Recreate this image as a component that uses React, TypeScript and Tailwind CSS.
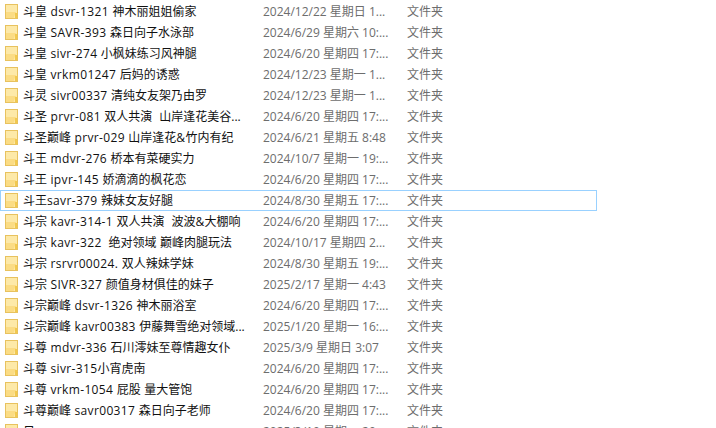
const rows: [string, string][] = [
  ["斗皇 dsvr-1321 神木丽姐姐偷家", "2024/12/22 星期日 1..."],
  ["斗皇 SAVR-393 森日向子水泳部", "2024/6/29 星期六 10:..."],
  ["斗皇 sivr-274 小枫妹练习风神腿", "2024/6/20 星期四 17:..."],
  ["斗皇 vrkm01247 后妈的诱惑", "2024/12/23 星期一 1..."],
  ["斗灵 sivr00337 清纯女友架乃由罗", "2024/12/23 星期一 1..."],
  ["斗圣 prvr-081 双人共演  山岸逢花美谷...", "2024/6/20 星期四 17:..."],
  ["斗圣巅峰 prvr-029 山岸逢花&竹内有纪", "2024/6/21 星期五 8:48"],
  ["斗王 mdvr-276 桥本有菜硬实力", "2024/10/7 星期一 19:..."],
  ["斗王 ipvr-145 娇滴滴的枫花恋", "2024/6/20 星期四 17:..."],
  ["斗王savr-379 辣妹女友好腿", "2024/8/30 星期五 17:..."],
  ["斗宗 kavr-314-1 双人共演  波波&大棚响", "2024/6/20 星期四 17:..."],
  ["斗宗 kavr-322  绝对领域 巅峰肉腿玩法", "2024/10/17 星期四 2..."],
  ["斗宗 rsrvr00024. 双人辣妹学妹", "2024/8/30 星期五 19:..."],
  ["斗宗 SIVR-327 颜值身材俱佳的妹子", "2025/2/17 星期一 4:43"],
  ["斗宗巅峰 dsvr-1326 神木丽浴室", "2024/6/20 星期四 17:..."],
  ["斗宗巅峰 kavr00383 伊藤舞雪绝对领域...", "2025/1/20 星期一 16:..."],
  ["斗尊 mdvr-336 石川澪妹至尊情趣女仆", "2025/3/9 星期日 3:07"],
  ["斗尊 sivr-315小宵虎南", "2024/6/20 星期四 17:..."],
  ["斗尊 vrkm-1054 屁股 量大管饱", "2024/6/20 星期四 17:..."],
  ["斗尊巅峰 savr00317 森日向子老师", "2024/6/20 星期四 17:..."],
  ["日", "2025/3/10 星期一 20:..."],
];

function Folder() {
  return (
    <svg width="13" height="15" viewBox="0 0 13 15" className="shrink-0">
      <rect x="0.5" y="0.5" width="12" height="14" fill="#fde9a8" stroke="#e8c25e" />
      <path d="M1 8 L1 14 L8.5 14 L11 8 Z" fill="#fbdc84" />
      <rect x="10" y="9" width="2" height="5" fill="#f2c94e" />
    </svg>
  );
}

function Name({ text }: { text: string }) {
  const parts = text.split(/([\x21-\x7e ]+)/).filter(Boolean);
  return (
    <span className="ml-[5px] w-[240px] shrink-0 whitespace-pre text-[#111111]">
      {parts.map((p, i) =>
        /^[\x21-\x7e ]/.test(p) && p !== "..." ? (
          <span key={i} className="tracking-[0.35px]">{p}</span>
        ) : (
          <span key={i}>{p}</span>
        )
      )}
    </span>
  );
}

export default function App() {
  return (
    <div className="w-[716px] h-[428px] overflow-hidden bg-white text-[12px] leading-[16px] font-['Open_Sans','Noto_Sans_CJK_SC',sans-serif]">
      <div className="flex flex-col w-[597px] pt-[1px]">
        {rows.map(([name, date], i) => (
          <div
            key={i}
            className={
              i === 9
                ? "flex items-center h-[21px] shrink-0 box-border pl-[4px] border border-[#99d1ff]"
                : "flex items-center h-[21px] shrink-0 box-border pl-[5px]"
            }
          >
            <Folder />
            <Name text={name} />
            <span className="w-[144px] shrink-0 whitespace-pre text-[#6d6d6d]">{date}</span>
            <span className="text-[#6d6d6d]">文件夹</span>
          </div>
        ))}
      </div>
    </div>
  );
}
